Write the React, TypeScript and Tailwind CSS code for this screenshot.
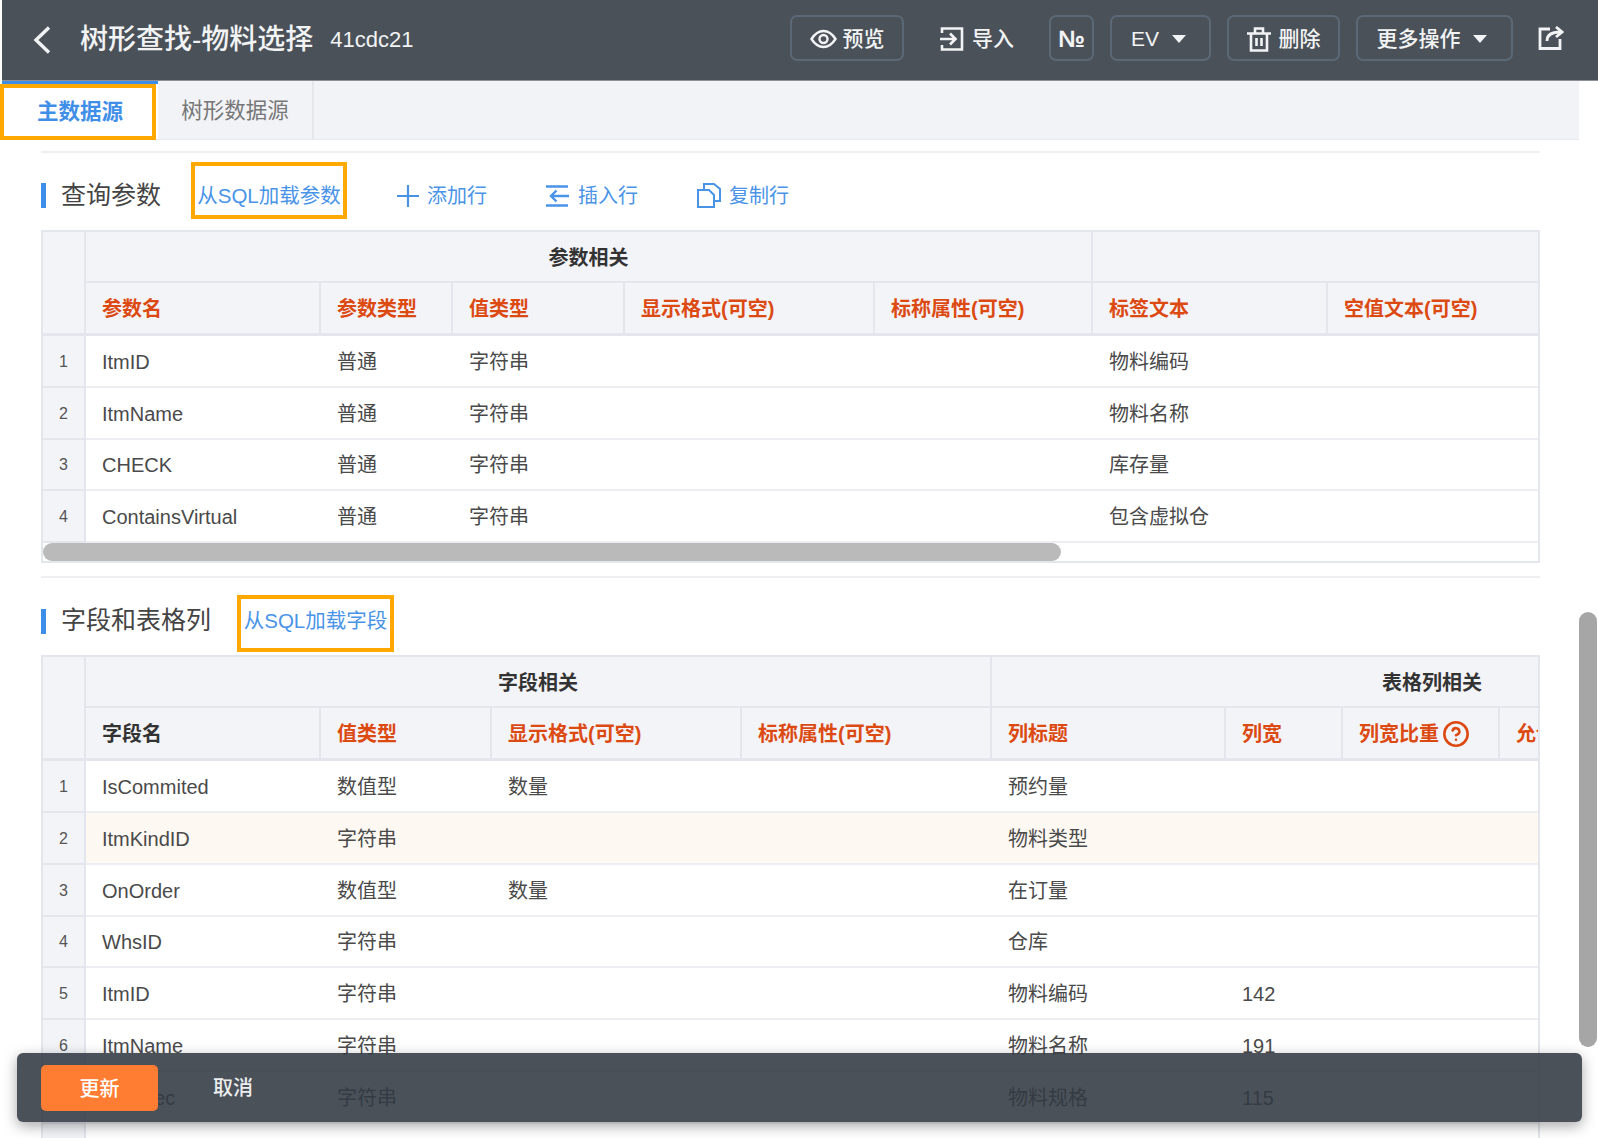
import React from 'react';
import { CircleHelp } from 'lucide-react';

type Col = { w: string; label: React.ReactNode; red?: boolean };
type Group = { w: string; label: string };

const paramCols: Col[] = [
  { w: 'w-[235px]', label: '参数名', red: true },
  { w: 'w-[132px]', label: '参数类型', red: true },
  { w: 'w-[172px]', label: '值类型', red: true },
  { w: 'w-[250px]', label: '显示格式(可空)', red: true },
  { w: 'w-[218px]', label: '标称属性(可空)', red: true },
  { w: 'w-[235px]', label: '标签文本', red: true },
  { w: 'w-[300px]', label: '空值文本(可空)', red: true },
];

const fieldCols: Col[] = [
  { w: 'w-[235px]', label: '字段名' },
  { w: 'w-[171px]', label: '值类型', red: true },
  { w: 'w-[250px]', label: '显示格式(可空)', red: true },
  { w: 'w-[250px]', label: '标称属性(可空)', red: true },
  { w: 'w-[234px]', label: '列标题', red: true },
  { w: 'w-[117px]', label: '列宽', red: true },
  {
    w: 'w-[157px]',
    red: true,
    label: (
      <span className="flex items-center gap-[3px]">
        列宽比重
        <CircleHelp size={28} strokeWidth={2.2} />
      </span>
    ),
  },
  { w: 'w-[200px]', label: '允许为空', red: true },
];

const paramRows = [
  ['ItmID', '普通', '字符串', '', '', '物料编码', ''],
  ['ItmName', '普通', '字符串', '', '', '物料名称', ''],
  ['CHECK', '普通', '字符串', '', '', '库存量', ''],
  ['ContainsVirtual', '普通', '字符串', '', '', '包含虚拟仓', ''],
];

const fieldRows = [
  ['IsCommited', '数值型', '数量', '', '预约量', '', '', ''],
  ['ItmKindID', '字符串', '', '', '物料类型', '', '', ''],
  ['OnOrder', '数值型', '数量', '', '在订量', '', '', ''],
  ['WhsID', '字符串', '', '', '仓库', '', '', ''],
  ['ItmID', '字符串', '', '', '物料编码', '142', '', ''],
  ['ItmName', '字符串', '', '', '物料名称', '191', '', ''],
  ['ItmSpec', '字符串', '', '', '物料规格', '115', '', ''],
  ['', '', '', '', '', '', '', ''],
];

const Caret = () => (
  <svg width="14" height="8" viewBox="0 0 14 8" fill="currentColor">
    <path d="M0 0h14L7 8z" />
  </svg>
);

const HeaderButton: React.FC<{ className: string; children: React.ReactNode }> = ({ className, children }) => (
  <div className={`flex h-[46px] items-center justify-center rounded-[7px] border-2 border-[#5b6876] pt-[2px] ${className}`}>
    {children}
  </div>
);

const DataTable: React.FC<{
  cols: Col[];
  groups: Group[];
  rows: string[][];
  highlight?: number;
  children?: React.ReactNode;
}> = ({ cols, groups, rows, highlight, children }) => (
  <div className="w-[1499px] overflow-hidden border-2 border-[#e4e6ee] bg-white">
    <div className="flex">
      <div className="h-[104px] w-[43px] shrink-0 border-r-2 border-b-[3px] border-[#e4e6ee] bg-[#f3f4f8]" />
      <div className="min-w-0 flex-1">
        <div className="flex h-[51px]">
          {groups.map((g, i) => (
            <div
              key={i}
              className={`${g.w} flex shrink-0 items-center justify-center border-r-2 border-b-2 border-[#e4e6ee] bg-[#f3f4f8] pt-[2px] font-semibold text-[#333]`}
            >
              {g.label}
            </div>
          ))}
        </div>
        <div className="flex h-[53px]">
          {cols.map((c, i) => (
            <div
              key={i}
              className={`${c.w} flex shrink-0 items-center border-r-2 border-b-[3px] border-[#e4e6ee] bg-[#f3f4f8] pt-[2px] pl-4 font-semibold whitespace-nowrap ${c.red ? 'text-[#dc4a12]' : 'text-[#333]'}`}
            >
              {c.label}
            </div>
          ))}
        </div>
      </div>
    </div>
    {rows.map((row, r) => (
      <div key={r} className="flex h-[51.8px]">
        <div className="flex w-[43px] shrink-0 items-center justify-center border-r-2 border-b-2 border-[#e4e6ee] bg-[#f3f4f8] pt-[2px] text-[16px] text-[#555]">
          {row[0] ? r + 1 : ''}
        </div>
        <div className={`flex min-w-0 flex-1 border-b-2 border-[#eceef3] ${r === highlight ? 'bg-[#fdf8f1]' : 'bg-white'}`}>
          {row.map((cell, i) => (
            <div key={i} className={`${cols[i].w} flex shrink-0 items-center pt-[2px] pl-4 whitespace-nowrap text-[#4a4a4a]`}>
              {cell}
            </div>
          ))}
        </div>
      </div>
    ))}
    {children}
  </div>
);

const ToolAction: React.FC<{ className: string; icon: React.ReactNode; label: string }> = ({ className, icon, label }) => (
  <div className={`flex items-center gap-2 text-[20px] text-[#4a94e8] ${className}`}>
    {icon}
    <span>{label}</span>
  </div>
);

export default function App() {
  return (
    <div className="relative h-[1138px] w-[1598px] overflow-hidden bg-white pl-[2px] font-[Liberation_Sans,Noto_Sans_CJK_SC,sans-serif] text-[20px]">
      {/* top bar */}
      <div className="flex h-[81px] items-center border-b border-[#8b9098] bg-[#4a5159] pr-[34px] pb-[4px] pl-[31px] text-[21px] font-medium text-[#f2f3f4]">
        <svg className="mt-[4px]" width="18" height="28" viewBox="0 0 18 28" fill="none" stroke="currentColor" strokeWidth="3.4">
          <path d="M16 1.5 3 14l13 12.5" />
        </svg>
        <span className="mt-[4px] ml-[29px] text-[28px]">树形查找-物料选择</span>
        <span className="mt-[2px] ml-[17px] text-[22px]">41cdc21</span>
        <div className="ml-auto flex items-center gap-4">
          <HeaderButton className="w-[114px] gap-[6px]">
            <svg width="27" height="20" viewBox="0 0 27 20" fill="none" stroke="currentColor" strokeWidth="2.4">
              <path d="M1.5 10C5 4.5 9 2 13.5 2s8.500 2.500 12 8c-3.500 5.500-7.500 8-12 8s-8.500-2.500-12-8z" />
              <circle cx="13.500" cy="10" r="4" />
            </svg>
            <span>预览</span>
          </HeaderButton>
          <div className="mr-[19px] ml-[20px] flex items-center gap-2 pt-[2px]">
            <svg width="24" height="26" viewBox="0 0 24 26" fill="none" stroke="currentColor" strokeWidth="2.600">
              <path d="M2 7V2.500h20v21H2V19" />
              <path d="M0 13h15M10 7.500l5.500 5.500-5.500 5.500" />
            </svg>
            <span>导入</span>
          </div>
          <HeaderButton className="w-[45px] text-[24px] font-bold">№</HeaderButton>
          <HeaderButton className="w-[101px] gap-[13px] pr-[4px]">
            <span>EV</span>
            <Caret />
          </HeaderButton>
          <HeaderButton className="w-[113px] gap-2">
            <svg width="24" height="25" viewBox="0 0 24 25" fill="none" stroke="currentColor" strokeWidth="2.600">
              <path d="M0 6.500h24M8 6V1.500h8V6M4 7v16.500h16V7M9.500 11v8M14.500 11v8" />
            </svg>
            <span>删除</span>
          </HeaderButton>
          <HeaderButton className="w-[157px] gap-[12px] pr-[6px]">
            <span>更多操作</span>
            <Caret />
          </HeaderButton>
          <svg className="ml-[9px]" width="26" height="24" viewBox="0 0 26 24" fill="none" stroke="currentColor" strokeWidth="2.800">
            <path d="M12 3H2v19.500h20V13" />
            <path d="M9 15c0-6 4-9 13-9M18 1l6 5-6 5" />
          </svg>
        </div>
      </div>

      {/* tabs */}
      <div className="mr-[19px] flex h-[59px] border-b border-[#e8e9ee] bg-[#f2f3f7] text-[21.500px]">
        <div className="flex w-[156px] items-center justify-center border-t-[3px] border-[#3d8ee8] bg-white pt-[2px] font-semibold text-[#3f8fe8]">
          主数据源
        </div>
        <div className="flex w-[156px] items-center justify-center border-r-2 border-[#e6e7ec] pt-[2px] text-[#777]">树形数据源</div>
      </div>
      <div className="absolute top-[84px] left-0 h-[56px] w-[156px] border-4 border-[#ffa800]" />

      {/* content */}
      <div className="ml-[39px] w-[1499px]">
        <div className="mt-[11px] border-t-2 border-[#eeeff3]" />
        <div className="mt-[9px] mb-[11px] flex items-center">
          <div className="mt-[10px] h-[25px] w-[5px] bg-[#3d8ee8]" />
          <span className="mt-[11px] ml-[15px] w-[100px] text-[25px] whitespace-nowrap text-[#444]">查询参数</span>
          <div className="ml-[30px] flex h-[57px] w-[156px] items-center justify-center border-4 border-[#ffa800] pt-[11px] text-[20.500px] whitespace-nowrap text-[#4a94e8]">
            从SQL加载参数
          </div>
          <ToolAction
            className="mt-[10px] ml-[50px]"
            label="添加行"
            icon={
              <svg width="22" height="22" viewBox="0 0 22 22" fill="none" stroke="currentColor" strokeWidth="2.200">
                <path d="M11 0v22M0 11h22" />
              </svg>
            }
          />
          <ToolAction
            className="mt-[10px] ml-[58px]"
            label="插入行"
            icon={
              <svg width="25" height="22" viewBox="0 0 25 22" fill="none" stroke="currentColor" strokeWidth="2.400">
                <path d="M1 1.500h22M1 20.500h22M24 11H6M11.500 5.500 6 11l5.500 5.500" />
              </svg>
            }
          />
          <ToolAction
            className="mt-[10px] ml-[59px]"
            label="复制行"
            icon={
              <svg width="24" height="25" viewBox="0 0 24 25" fill="none" stroke="currentColor" strokeWidth="2">
                <path d="M1 7h11l5 5v12H1zM7 6V1h10l6 5v12h-5" />
              </svg>
            }
          />
        </div>
        <DataTable
          cols={paramCols}
          groups={[
            { w: 'w-[1007px]', label: '参数相关' },
            { w: 'w-[448px]', label: '' },
          ]}
          rows={paramRows}
        >
          <div className="h-[18px]">
            <div className="h-[18px] w-[1018px] rounded-full bg-[#bababa]" />
          </div>
        </DataTable>

        <div className="mt-[13px] border-t-2 border-[#eeeff3]" />
        <div className="mt-[17px] mb-[3px] flex items-center">
          <div className="mb-[5px] h-[25px] w-[5px] bg-[#3d8ee8]" />
          <span className="mb-[5px] ml-[15px] w-[150px] text-[25px] whitespace-nowrap text-[#444]">字段和表格列</span>
          <div className="ml-[26px] flex h-[57px] w-[157px] items-center justify-center border-4 border-[#ffa800] pb-[4px] text-[20.500px] whitespace-nowrap text-[#4a94e8]">
            从SQL加载字段
          </div>
        </div>
        <DataTable
          cols={fieldCols}
          groups={[
            { w: 'w-[906px]', label: '字段相关' },
            { w: 'w-[882px]', label: '表格列相关' },
          ]}
          rows={fieldRows}
          highlight={1}
        />
      </div>

      {/* page scrollbar */}
      <div className="absolute top-[612px] right-[1px] h-[435px] w-[18px] rounded-full bg-[#a6a6a6]" />

      {/* fixed action bar */}
      <div className="absolute top-[1053px] left-[17px] flex h-[69px] w-[1565px] items-center rounded-[6px] bg-[#313942]/[0.88] pl-[24px] shadow-[0_4px_14px_rgba(0,0,0,0.35)]">
        <div className="flex h-[46px] w-[117px] items-center justify-center rounded-[5px] bg-[#ff7d33] pt-[2px] font-medium text-white">
          更新
        </div>
        <span className="ml-[55px] font-medium text-[#eceef0]">取消</span>
      </div>
    </div>
  );
}
